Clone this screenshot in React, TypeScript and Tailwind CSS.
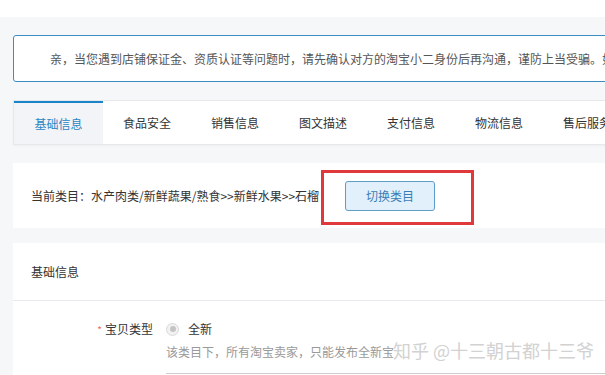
import React from 'react';

const tabs = ['基础信息', '食品安全', '销售信息', '图文描述', '支付信息', '物流信息', '售后服务'];

export default function App() {
  return (
    <div
      className="w-[605px] h-[375px] overflow-hidden bg-[#f5f7f9] text-[12px] text-[#333]"
      style={{ fontFamily: '"Noto Sans CJK SC", "Noto Sans", sans-serif' }}
    >
      <div className="h-[17px] bg-white" />
      <div className="w-[800px] pl-[13px] pt-[18px]">
        {/* notice */}
        <div className="flex h-[47px] items-center rounded-[3px] border border-[#3b8dc2] bg-white pl-[36px] whitespace-nowrap text-[#555]">
          亲，当您遇到店铺保证金、资质认证等问题时，请先确认对方的淘宝小二身份后再沟通，谨防上当受骗。如有疑问请联系客服。
        </div>

        {/* tabs */}
        <div className="mt-[18px] flex h-[45px] border border-[#e6e8eb] bg-white shadow-[0_1px_2px_rgba(0,0,0,0.04)]">
          {tabs.map((t, i) => (
            <div
              key={t}
              className={
                i === 0
                  ? 'flex w-[89px] items-center justify-center border-t-2 border-[#1b84c8] bg-[#f2f4f7] text-[#2a86c4]'
                  : 'flex w-[88px] items-center justify-center'
              }
            >
              {t}
            </div>
          ))}
        </div>

        {/* current category */}
        <div className="mt-[18px] flex h-[65px] items-center bg-white pl-[18px]">
          <span>当前类目：水产肉类/新鲜蔬果/熟食&gt;&gt;新鲜水果&gt;&gt;石榴</span>
          <div className="relative ml-[26px]">
            <button className="h-[30px] w-[90px] rounded-[3px] border border-[#5f9dc8] bg-[#e2f0fb] text-[#3a7db5]">
              切换类目
            </button>
            <div className="absolute -left-[24px] -top-[11px] h-[55px] w-[153px] border-[3px] border-[#e0393c]" />
          </div>
        </div>

        {/* basic info */}
        <div className="relative mt-[15px] bg-white">
          <div className="flex h-[58px] items-center border-b border-[#e8eaed] pl-[18px]">基础信息</div>
          <div className="flex pt-[19px]">
            <div className="w-[140px] text-right">
              <span className="mr-[3px] text-[10px] text-[#e66]">*</span>
              宝贝类型
            </div>
            <div className="ml-[13px]">
              <div className="flex items-center">
                <span className="flex h-[13px] w-[13px] items-center justify-center rounded-full border border-[#d9d9d9] bg-[#f2f2f2]">
                  <span className="h-[6px] w-[6px] rounded-full bg-[#c4c4c4]" />
                </span>
                <span className="ml-[9px]">全新</span>
              </div>
              <div className="mt-[5px] text-[#999]">该类目下，所有淘宝卖家，只能发布全新宝</div>
              <div className="mt-[12px] h-[30px] w-[500px] border-t border-[#ccc]" />
            </div>
          </div>
          <div className="absolute left-[380px] top-[94px] text-[18px] text-[#d2d2d2] [text-shadow:0_0_1px_#fff]">
            知乎 @十三朝古都十三爷
          </div>
        </div>
      </div>
    </div>
  );
}
